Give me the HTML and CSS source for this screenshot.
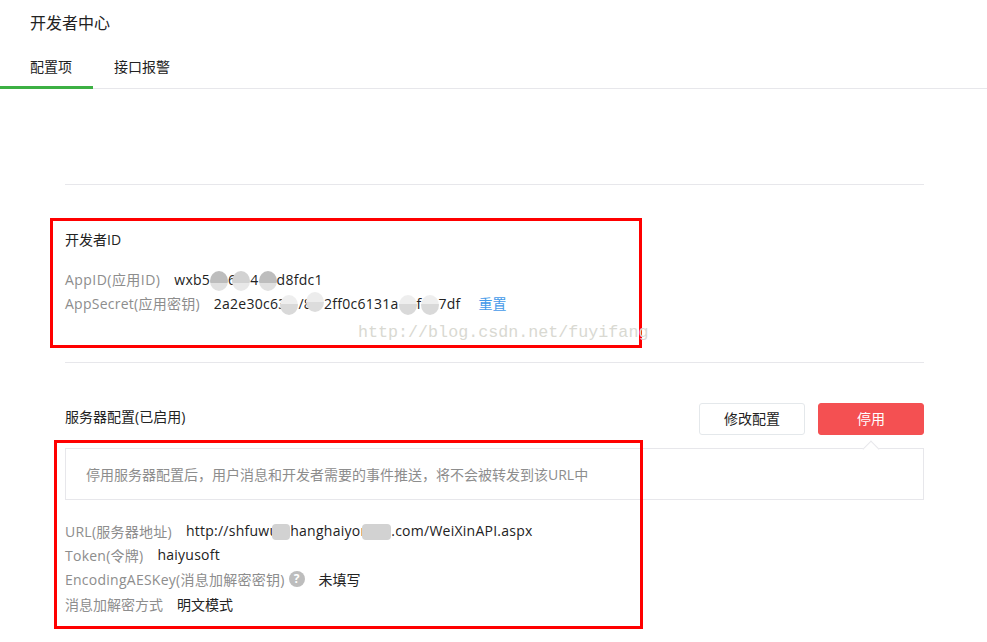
FILE: index.html
```html
<!DOCTYPE html>
<html lang="zh-CN">
<head>
<meta charset="utf-8">
<title>开发者中心</title>
<link rel="stylesheet" href="styles.css">
</head>
<body>
<header class="top">
  <h1 class="title">开发者中心</h1>
  <nav class="tabs">
    <a class="tab tab-active">配置项</a>
    <a class="tab">接口报警</a>
  </nav>
</header>
<main class="main">
  <section class="section section-id">
    <h2 class="heading">开发者ID</h2>
    <div class="rows rows-id">
      <div class="row"><span class="label latin latin-wide">AppID(应用ID)</span><span class="value latin">wxb5<span class="blur b-dark b-w1"></span>6<span class="blur b-mid b-w2"></span>4<span class="blur b-dark b-w3"></span>d8fdc1</span></div>
      <div class="row"><span class="label latin">AppSecret(应用密钥)</span><span class="value latin">2a2e30c63<span class="blur b-up b-w4"></span>/8<span class="blur b-high b-w5"></span>2ff0c6131a<span class="blur b-up b-w6"></span>f<span class="blur b-up b-w7"></span>7df</span><a class="link">重置</a></div>
    </div>
  </section>
  <section class="section section-server">
    <div class="server-head">
      <h2 class="heading">服务器配置(已启用)</h2>
      <div class="actions">
        <button class="btn">修改配置</button>
        <button class="btn btn-red">停用</button>
      </div>
    </div>
    <div class="notice">停用服务器配置后，用户消息和开发者需要的事件推送，将不会被转发到该URL中</div>
    <div class="rows rows-server">
      <div class="row"><span class="label latin">URL(服务器地址)</span><span class="value latin">http://shfuwu<span class="blur b-rect b-w8"></span>hanghaiyon<span class="blur b-rect b-w9"></span>.com/WeiXinAPI.aspx</span></div>
      <div class="row"><span class="label latin">Token(令牌)</span><span class="value latin">haiyusoft</span></div>
      <div class="row"><span class="label latin">EncodingAESKey(消息加解密密钥)</span><span class="help">?</span><span class="value">未填写</span></div>
      <div class="row"><span class="label">消息加解密方式</span><span class="value">明文模式</span></div>
    </div>
  </section>
</main>
<div class="mark mark-id"></div>
<div class="mark mark-server"></div>
<div class="watermark">http://blog.csdn.net/fuyifang</div>
</body>
</html>
```
FILE: styles.css
```css
* { box-sizing: border-box; }
html, body { margin: 0; padding: 0; }
body {
  position: relative;
  width: 987px;
  height: 642px;
  overflow: hidden;
  background: #fff;
  color: #222;
  font-family: "Open Sans", "Noto Sans CJK SC", sans-serif;
  font-size: 14px;
}
.top { height: 89px; border-bottom: 1px solid #e7e7eb; }
.title {
  margin: 0;
  padding: 12px 0 0 30px;
  height: 47px;
  font-size: 16px;
  line-height: 22px;
  font-weight: 400;
}
.tabs { display: flex; height: 42px; }
.tab {
  padding: 9px 21px 0;
  line-height: 22px;
  font-size: 14px;
  color: #222;
}
.tab-active {
  padding-left: 30px;
  border-bottom: 3px solid #3cb043;
  height: 42px;
}
.main { padding: 95px 63px 0 65px; }
.section { border-top: 1px solid #e7e7eb; }
.heading {
  margin: 0;
  font-size: 14px;
  line-height: 22px;
  font-weight: 400;
  color: #222;
}
.section-id { height: 178px; padding-top: 44px; }
.rows { display: flex; flex-direction: column; }
.rows-id { margin-top: 16px; }
.row { display: flex; align-items: center; height: 24px; white-space: nowrap; }
.label { color: #8d8d8d; }
.latin { letter-spacing: 0.25px; }
.latin-wide { letter-spacing: 0.45px; }
.value { position: relative; margin-left: 14px; color: #222; }
.link { margin-left: 18px; color: #459ae9; }
.section-server { padding-top: 40px; }
.server-head { display: flex; justify-content: space-between; align-items: flex-start; }
.server-head .heading { margin-top: 3px; }
.actions { display: flex; gap: 13px; }
.btn {
  width: 106px;
  height: 32px;
  border: 1px solid #e4e8eb;
  border-radius: 3px;
  background: #fff;
  color: #222;
  font: inherit;
  padding: 0 0 2px;
}
.btn-red { background: #f45052; border-color: #f45052; color: #fff; }
.notice {
  position: relative;
  margin-top: 13px;
  height: 52px;
  padding: 0 20px;
  border: 1px solid #e7e7eb;
  line-height: 52px;
  color: #8d8d8d;
}
.notice::before {
  content: "";
  position: absolute;
  right: 46px;
  top: -6px;
  width: 11px;
  height: 11px;
  background: #fff;
  border-top: 1px solid #e7e7eb;
  border-left: 1px solid #e7e7eb;
  transform: rotate(45deg);
}
.rows-server { margin-top: 18.6px; gap: 0.4px; }
.help {
  flex: none;
  width: 16px;
  height: 16px;
  margin-left: 4px;
  border-radius: 50%;
  background: #bdbdbd;
  color: #fff;
  font-size: 12px;
  font-weight: 700;
  line-height: 16px;
  text-align: center;
}
.blur {
  display: inline-block;
  vertical-align: middle;
  height: 20px;
  margin-top: -8px;
  margin-bottom: -8px;
  border-radius: 50%;
}
.b-dark { background: linear-gradient(#bdbdbd 58%, #e0e0e0 58%); }
.b-mid { background: linear-gradient(#d2d2d2 58%, #e8e8e8 58%); }
.b-up { background: linear-gradient(#eeeeee 45%, #d9d9d9 45%); }
.b-high { background: linear-gradient(#ececec 50%, #dcdcdc 50%); transform: translateY(-3px); }
.b-rect { background: #d2d2d2; height: 16px; border-radius: 4px; }
.b-w1 { width: 18px; }
.b-w2 { width: 18px; margin-left: -4px; }
.b-w3 { width: 18px; }
.b-w4 { width: 18px; margin-left: -6px; }
.b-w5 { width: 18px; margin-left: -6px; }
.b-w6 { width: 18px; }
.b-w7 { width: 18px; margin-left: -1px; }
.b-w8 { width: 18px; margin-left: -6px; }
.b-w9 { width: 29px; margin-left: -7px; }
.mark {
  position: absolute;
  border: 3px solid #f00;
}
.mark-id { left: 50px; top: 218px; width: 592px; height: 130px; }
.mark-server { left: 54px; top: 440px; width: 589px; height: 189px; }
.watermark {
  position: absolute;
  left: 358px;
  top: 323px;
  color: #d9d9d2;
  font-family: "Liberation Mono", monospace;
  font-size: 16.7px;
  line-height: 20px;
  white-space: nowrap;
}
```
